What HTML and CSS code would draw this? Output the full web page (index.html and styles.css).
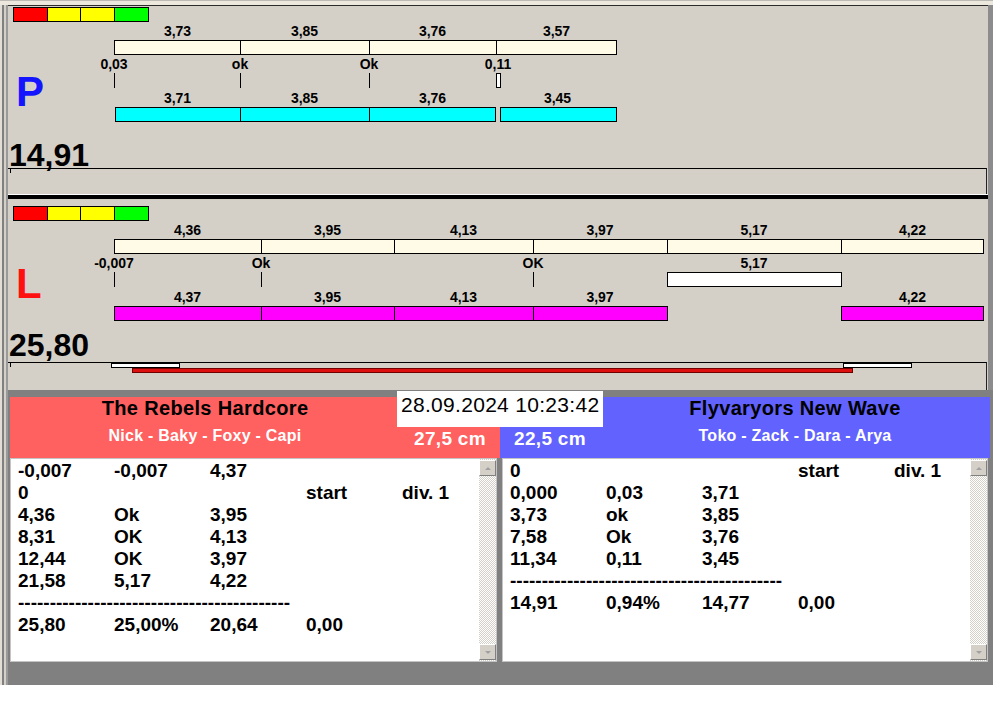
FILE: index.html
```html
<!DOCTYPE html>
<html>
<head>
<meta charset="utf-8">
<title>Relay timing</title>
<link rel="stylesheet" href="styles.css">
</head>
<body>
<div class="topstrip"></div>
<div class="window">
  <div class="top">
    <div class="panels">
      <section class="panel panel-p">
        <div class="legend"><span class="lg red"></span><span class="lg y1"></span><span class="lg y2"></span><span class="lg green"></span></div>
        <div class="chart-wrap">
          <div class="letter letter-p">P</div>
          <div class="chart">
            <div class="lbl-row">
              <span class="lbl" style="left:63.5px">3,73</span>
              <span class="lbl" style="left:190.5px">3,85</span>
              <span class="lbl" style="left:318.5px">3,76</span>
              <span class="lbl" style="left:442.5px">3,57</span>
            </div>
            <div class="bar-row">
              <span class="seg cream" style="left:0;width:127px"></span>
              <span class="seg cream" style="left:126px;width:130px"></span>
              <span class="seg cream" style="left:255px;width:128px"></span>
              <span class="seg cream" style="left:382px;width:121px"></span>
            </div>
            <div class="lbl-row">
              <span class="lbl" style="left:0">0,03</span>
              <span class="lbl" style="left:126px">ok</span>
              <span class="lbl" style="left:255px">Ok</span>
              <span class="lbl" style="left:384px">0,11</span>
            </div>
            <div class="tick-row">
              <span class="tick" style="left:0"></span>
              <span class="tick" style="left:126px"></span>
              <span class="tick" style="left:255px"></span>
              <span class="tickbox" style="left:382px"></span>
            </div>
            <div class="lbl-row">
              <span class="lbl" style="left:63.5px">3,71</span>
              <span class="lbl" style="left:190.5px">3,85</span>
              <span class="lbl" style="left:318.5px">3,76</span>
              <span class="lbl" style="left:443.5px">3,45</span>
            </div>
            <div class="bar-row">
              <span class="seg cyan" style="left:1px;width:126px"></span>
              <span class="seg cyan" style="left:126px;width:130px"></span>
              <span class="seg cyan" style="left:255px;width:127px"></span>
              <span class="seg cyan" style="left:386px;width:117px"></span>
            </div>
          </div>
        </div>
        <div class="total">14,91</div>
        <div class="track"><span class="mark"></span></div>
      </section>
      <div class="sep"></div>
      <section class="panel panel-l">
        <div class="legend"><span class="lg red"></span><span class="lg y1"></span><span class="lg y2"></span><span class="lg green"></span></div>
        <div class="chart-wrap">
          <div class="letter letter-l">L</div>
          <div class="chart">
            <div class="lbl-row">
              <span class="lbl" style="left:73.5px">4,36</span>
              <span class="lbl" style="left:213.5px">3,95</span>
              <span class="lbl" style="left:349.5px">4,13</span>
              <span class="lbl" style="left:486px">3,97</span>
              <span class="lbl" style="left:640px">5,17</span>
              <span class="lbl" style="left:798.5px">4,22</span>
            </div>
            <div class="bar-row">
              <span class="seg cream" style="left:0;width:148px"></span>
              <span class="seg cream" style="left:147px;width:134px"></span>
              <span class="seg cream" style="left:280px;width:140px"></span>
              <span class="seg cream" style="left:419px;width:135px"></span>
              <span class="seg cream" style="left:553px;width:175px"></span>
              <span class="seg cream" style="left:727px;width:143px"></span>
            </div>
            <div class="lbl-row">
              <span class="lbl" style="left:0">-0,007</span>
              <span class="lbl" style="left:147px">Ok</span>
              <span class="lbl" style="left:419px">OK</span>
              <span class="lbl" style="left:640px">5,17</span>
            </div>
            <div class="tick-row">
              <span class="tick" style="left:0"></span>
              <span class="tick" style="left:147px"></span>
              <span class="tick" style="left:419px"></span>
              <span class="seg white" style="left:553px;width:175px"></span>
            </div>
            <div class="lbl-row">
              <span class="lbl" style="left:73.5px">4,37</span>
              <span class="lbl" style="left:213.5px">3,95</span>
              <span class="lbl" style="left:349.5px">4,13</span>
              <span class="lbl" style="left:486px">3,97</span>
              <span class="lbl" style="left:798.5px">4,22</span>
            </div>
            <div class="bar-row">
              <span class="seg magenta" style="left:0;width:148px"></span>
              <span class="seg magenta" style="left:147px;width:134px"></span>
              <span class="seg magenta" style="left:280px;width:140px"></span>
              <span class="seg magenta" style="left:419px;width:135px"></span>
              <span class="seg magenta" style="left:727px;width:143px"></span>
            </div>
          </div>
        </div>
        <div class="total">25,80</div>
        <div class="track">
          <span class="mark"></span>
          <span class="tbar-white" style="left:103px;width:69px"></span>
          <span class="tbar-white" style="left:835px;width:69px"></span>
          <span class="tbar-red" style="left:124px;width:721px"></span>
        </div>
      </section>
    </div>
    <div class="rframe"></div>
  </div>
  <div class="bottom">
    <div class="headers">
      <div class="hdr hdr-left">
        <div class="team">
          <div class="team-name">The Rebels Hardcore</div>
          <div class="players">Nick - Baky - Foxy - Capi</div>
        </div>
        <div class="cm">27,5 cm</div>
      </div>
      <div class="hdr hdr-right">
        <div class="cm">22,5 cm</div>
        <div class="team">
          <div class="team-name">Flyvaryors New Wave</div>
          <div class="players">Toko - Zack - Dara - Arya</div>
        </div>
      </div>
    </div>
    <div class="date">28.09.2024 10:23:42</div>
    <div class="lists">
      <div class="list">
        <div class="list-body">
          <div class="row"><span>-0,007</span><span>-0,007</span><span>4,37</span><span></span><span></span></div>
          <div class="row"><span>0</span><span></span><span></span><span>start</span><span>div. 1</span></div>
          <div class="row"><span>4,36</span><span>Ok</span><span>3,95</span></div>
          <div class="row"><span>8,31</span><span>OK</span><span>4,13</span></div>
          <div class="row"><span>12,44</span><span>OK</span><span>3,97</span></div>
          <div class="row"><span>21,58</span><span>5,17</span><span>4,22</span></div>
          <div class="row"><span class="dashes">-------------------------------------------</span></div>
          <div class="row"><span>25,80</span><span>25,00%</span><span>20,64</span><span>0,00</span></div>
        </div>
        <div class="scroll">
          <div class="sb-btn"><span class="arrow-up"></span></div>
          <div class="sb-track"></div>
          <div class="sb-btn"><span class="arrow-down"></span></div>
        </div>
      </div>
      <div class="list">
        <div class="list-body">
          <div class="row"><span>0</span><span></span><span></span><span>start</span><span>div. 1</span></div>
          <div class="row"><span>0,000</span><span>0,03</span><span>3,71</span></div>
          <div class="row"><span>3,73</span><span>ok</span><span>3,85</span></div>
          <div class="row"><span>7,58</span><span>Ok</span><span>3,76</span></div>
          <div class="row"><span>11,34</span><span>0,11</span><span>3,45</span></div>
          <div class="row"><span class="dashes">-------------------------------------------</span></div>
          <div class="row"><span>14,91</span><span>0,94%</span><span>14,77</span><span>0,00</span></div>
        </div>
        <div class="scroll">
          <div class="sb-btn"><span class="arrow-up"></span></div>
          <div class="sb-track"></div>
          <div class="sb-btn"><span class="arrow-down"></span></div>
        </div>
      </div>
    </div>
  </div>
</div>
</body>
</html>
```

FILE: styles.css
```css
* { box-sizing: border-box; }
html, body { margin: 0; padding: 0; background: #ffffff; }
body {
  font-family: "Liberation Sans", Arial, sans-serif;
  width: 995px;
  height: 716px;
  overflow: hidden;
  color: #000;
}

.topstrip {
  width: 993px;
  height: 5px;
  background: #ede8dd;
  border-top: 1px solid #bdbab4;
}

.window {
  width: 993px;
  height: 680px;
  display: flex;
  flex-direction: column;
  background-image: linear-gradient(to right, #e2ded6 0 2px, #808080 2px 4px, #d4d0c8 4px 6px, #9a9a9a 6px 8px);
  background-size: 8px 100%;
  background-repeat: no-repeat;
}

.top {
  display: flex;
  height: 385px;
  margin-left: 8px;
}

.panels {
  width: 980px;
  background: #d4d0c8;
  border-top: 1px solid #2b2b2b;
  display: flex;
  flex-direction: column;
}

.rframe {
  width: 5px;
  background: #8c8c8c;
}

.panel { display: flex; flex-direction: column; }
.panel-p { height: 188px; }
.panel-l { height: 191px; }

.sep {
  height: 5px;
  border-top: 1px solid #ffffff;
  background: #000;
}

.legend {
  display: flex;
  width: 136px;
  height: 15px;
  border: 1px solid #000;
  margin-left: 5px;
}
.panel-p .legend { margin-top: 1px; }
.panel-l .legend { margin-top: 7px; }
.lg { height: 100%; border-right: 1px solid #000; }
.lg.green { border-right: 0; }
.lg.red { width: 34px; background: #ff0000; }
.lg.y1 { width: 33px; background: #ffff00; }
.lg.y2 { width: 34px; background: #ffff00; }
.lg.green { width: 33px; background: #00ff00; }

.chart-wrap {
  display: flex;
  height: 100px;
  padding-left: 5px;
}

.letter {
  width: 101px;
  flex: none;
  font-size: 42px;
  font-weight: bold;
  line-height: 42px;
  padding-left: 3px;
}
.letter-p { color: #1414ff; padding-top: 49px; }
.letter-l { color: #ff1010; padding-top: 42px; }

.chart { position: relative; flex: 1; }
.lbl-row { position: relative; height: 18px; }
.bar-row { position: relative; height: 15px; }
.tick-row { position: relative; height: 16px; }

.lbl {
  position: absolute;
  top: 0;
  transform: translateX(-50%);
  font-size: 14px;
  font-weight: bold;
  line-height: 18px;
  white-space: nowrap;
}

.seg {
  position: absolute;
  top: 0;
  height: 15px;
  border: 1px solid #000;
}
.cream { background: #fffbe6; }
.cyan { background: #00ffff; }
.magenta { background: #ff00ff; }
.white { background: #ffffff; }

.tick {
  position: absolute;
  top: 0;
  width: 1px;
  height: 15px;
  background: #000;
}
.tickbox {
  position: absolute;
  top: 0;
  width: 5px;
  height: 15px;
  border: 1px solid #000;
  background: #fff;
}

.total {
  font-size: 32px;
  font-weight: bold;
  line-height: 25px;
  height: 25px;
  margin-left: 1px;
  white-space: nowrap;
}
.panel-p .total { margin-top: 21px; }
.panel-l .total { margin-top: 12px; }

.track {
  position: relative;
  border-top: 1px solid #000;
  border-right: 1px solid #222;
  margin-right: 1px;
}
.panel-p .track { height: 26px; }
.panel-l .track { height: 28px; margin-top: 4px; }

.mark {
  position: absolute;
  left: 2px;
  top: 0;
  width: 1px;
  height: 4px;
  background: #000;
}
.tbar-white {
  position: absolute;
  top: 0;
  height: 5px;
  background: #fff;
  border: 1px solid #000;
}
.tbar-red {
  position: absolute;
  top: 5px;
  height: 5px;
  background: #dd1010;
  border: 1px solid #700000;
}

.bottom {
  flex: 1;
  margin-left: 8px;
  background: #808080;
  position: relative;
  padding: 7px 3px 0 2px;
}

.headers {
  display: grid;
  grid-template-columns: 490px 490px;
  height: 61px;
}
.hdr { display: grid; height: 61px; }
.hdr-left { background: #ff6060; grid-template-columns: 390px 100px; }
.hdr-right { background: #6262ff; grid-template-columns: 100px 390px; }

.team { text-align: center; white-space: nowrap; }
.team-name {
  font-size: 20px;
  font-weight: bold;
  line-height: 22px;
  letter-spacing: 0.35px;
  color: #000;
}
.players {
  margin-top: 8px;
  font-size: 16px;
  font-weight: bold;
  line-height: 18px;
  letter-spacing: 0.25px;
  color: #fff;
}
.cm {
  padding-top: 31px;
  font-size: 19px;
  font-weight: bold;
  line-height: 22px;
  letter-spacing: 0.3px;
  color: #fff;
  text-align: center;
  white-space: nowrap;
}

.date {
  position: absolute;
  left: 389px;
  top: 1px;
  width: 206px;
  height: 36px;
  background: #fff;
  font-size: 21px;
  line-height: 24px;
  letter-spacing: 0.3px;
  padding: 2px 0 0 4px;
  white-space: nowrap;
}

.lists {
  display: grid;
  grid-template-columns: 487px 486px;
  column-gap: 5px;
  height: 204px;
}
.list {
  display: flex;
  background: #fff;
  border: 1px solid #c4c4c4;
  min-width: 0;
}
.list-body {
  flex: 1;
  min-width: 0;
  overflow: hidden;
  padding: 1px 0 0 7px;
  font-size: 19px;
  font-weight: bold;
  line-height: 22px;
}
.row {
  display: grid;
  grid-template-columns: 96px 96px 96px 96px 1fr;
  height: 22px;
  white-space: nowrap;
}
.dashes { grid-column: 1 / 6; }

.scroll {
  width: 17px;
  flex: none;
  display: flex;
  flex-direction: column;
  padding: 1px 0;
  background: repeating-conic-gradient(#d4d0c8 0 25%, #ffffff 0 50%) 0 0 / 2px 2px;
}
.sb-btn {
  height: 16px;
  flex: none;
  background: #d4d0c8;
  border: 1px solid;
  border-color: #ffffff #808080 #808080 #ffffff;
  display: flex;
  align-items: center;
  justify-content: center;
}
.sb-track { flex: 1; }
.arrow-up {
  width: 0;
  height: 0;
  border-left: 3px solid transparent;
  border-right: 3px solid transparent;
  border-bottom: 3px solid #a0a0a0;
}
.arrow-down {
  width: 0;
  height: 0;
  border-left: 3px solid transparent;
  border-right: 3px solid transparent;
  border-top: 3px solid #a0a0a0;
}
```
